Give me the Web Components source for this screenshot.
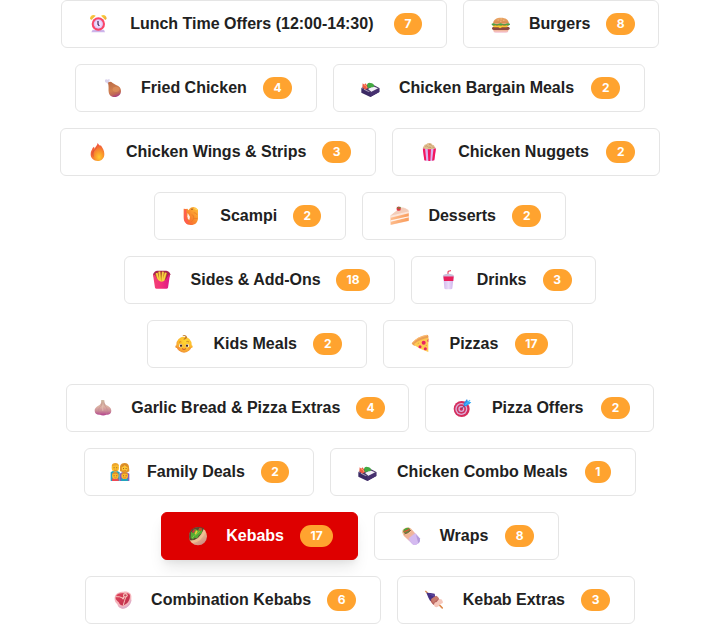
<!DOCTYPE html>
<html lang="en">
<head>
<meta charset="utf-8">
<title>Menu categories</title>
<style>
body{margin:0;background:#fff;font-family:"Liberation Sans",Arial,sans-serif;overflow:hidden}
</style>
</head>
<body>
<category-nav></category-nav>
<script>
const ICONS = {
clock:`<defs><radialGradient id="g"><stop offset=".6" stop-color="#f0dcff"/><stop offset="1" stop-color="#d9b8ee"/></radialGradient><linearGradient id="y" x2="1" y2="1"><stop stop-color="#ffd83c"/><stop offset="1" stop-color="#e8a03a"/></linearGradient></defs>
<path d="M11 47h34l3 8H7z" fill="#cdb4ea"/><path d="M3 14C3 5 12 0 20 5L7 18z" fill="url(#y)"/><path d="M53 14C53 5 44 0 36 5l13 13z" fill="url(#y)"/>
<circle cx="28" cy="30" r="20" fill="#fb4568"/><circle cx="28" cy="30" r="14" fill="url(#g)"/><path d="M27 21v10l4 5" stroke="#332556" stroke-width="3.5" fill="none"/>`,
leg:`<defs><linearGradient id="g" x1=".3" x2=".6" y2="1"><stop stop-color="#bd6c45"/><stop offset=".55" stop-color="#d08050"/><stop offset=".8" stop-color="#c06858"/><stop offset="1" stop-color="#a53a86"/></linearGradient></defs>
<path d="M6 6q3-4 7-1l6-2q3 4-1 8l4 6-5 3-6-6q-6 0-5-8z" fill="#d9d2ec"/><path d="M15 14q7-6 14 1l10 6c10 3 15 9 15 18 0 11-8 18-19 18-10 0-17-6-18-16-1-8 1-13-2-27z" fill="url(#g)"/><ellipse cx="39" cy="34" rx="10" ry="8" fill="#e0925d" opacity=".7"/>`,
bento:`<path d="M1 30l27 13 27-13v12L28 57 1 44z" fill="#3b2a64"/><path d="M28 43l27-13v12L28 57z" fill="#46306f"/><path d="M1 30l27-14 27 14-27 13z" fill="#4a3868"/><path d="M21 33l15-8 15 6-20 10z" fill="#f4eff9"/><path d="M4 28l1-12 5 4 3-4 4 4 4 10-8 5z" fill="#ee5941"/><path d="M10 22l5 1 3 7" stroke="#ff9a66" stroke-width="3" fill="none"/><path d="M18 21q2-8 10-6 10 0 11 8 1 5-7 5l-11 3z" fill="#43a941"/><path d="M9 34l14 7" stroke="#c4bad4" stroke-width="2"/>`,
burger:`<defs><linearGradient id="g" x2="0" y2="1"><stop stop-color="#eba765"/><stop offset="1" stop-color="#d98a50"/></linearGradient><linearGradient id="b" x2="0" y2="1"><stop stop-color="#f0b080"/><stop offset="1" stop-color="#f5c4d8"/></linearGradient></defs>
<path d="M7 46h45v4q0 6-7 6H14q-7 0-7-6z" fill="url(#b)"/><rect x="3" y="38" width="53" height="10" rx="5" fill="#8d493f"/><path d="M5 33h49l-7 7H33l-6 3-5-3H8z" fill="#fbc92f"/><rect x="6" y="30" width="47" height="4" fill="#e4474a"/><path d="M6 29C7 16 16 11 30 11s23 6 24 18z" fill="url(#g)"/><path d="M2 29q5-3 10 0t11 0 11 0 11 0 12 0v3q-6 4-11 1-6 3-11 0-6 3-11 0-6 3-11 0-6 4-11-1z" fill="#4ba347"/><path d="M20 18h3m6-3h3m5 4h3m-12 3h3" stroke="#fbe0b0" stroke-width="2"/>`,
fire:`<defs><radialGradient id="g" cx=".62" cy=".78" r=".75"><stop stop-color="#ffc832"/><stop offset=".4" stop-color="#fa982c"/><stop offset="1" stop-color="#ef493c"/></radialGradient></defs>
<path d="M29 3q2 5 8 9l1-3c6 9 11 17 11 27 0 13-8 21-20 21S8 49 8 37c0-9 4-13 6-19l4-4 2 6c2-7 8-9 9-17z" fill="url(#g)"/><path d="M26 16q-4 8-9 11-3 8-1 17M18 24q-6 6-6 16" stroke="#d94838" stroke-width="1.8" fill="none"/>`,
shrimp:`<defs><linearGradient id="g" x1="0" x2="1" y1="1" y2="0"><stop stop-color="#fa5141"/><stop offset=".5" stop-color="#f98a2c"/><stop offset="1" stop-color="#ffc23a"/></linearGradient></defs>
<path d="M5 8l7 1 4-1 4 5q5-10 14-10 9 0 14 8v24c0 14-8 22-22 22C12 57 5 48 5 34z" fill="url(#g)"/><path d="M17 21l7 11-2 10q-6-2-6-11z" fill="#fff0e8"/><path d="M29 26q7 0 6 10-1 9-8 11M35 20q9 0 10 7M36 37l11 1" stroke="#e97625" stroke-width="2" fill="none"/><path d="M10 10v29l7 13" stroke="#ff5d52" stroke-width="6" fill="none"/><circle cx="30" cy="10" r="2.3" fill="#8b5126"/><path d="M37 8l9 3" stroke="#ffe05c" stroke-width="3"/>`,
popcorn:`<defs><clipPath id="c"><path d="M8 19q20 6 40 0l-5 36q-15 4-30 0z"/></clipPath></defs><path d="M9 20q-2-5 3-8 0-5 7-5 3-5 11-4 5 1 7 5 6 0 7 6 4 2 2 7l-18 5z" fill="#dfbd8e"/><path d="M16 13q4-3 7 1m4-7q5-1 7 4m-9 5q6-2 9 2m3-3q4-1 6 3" stroke="#b58757" stroke-width="2" fill="none"/><g clip-path="url(#c)"><path d="M6 17h44v41H6z" fill="#d9b2ef"/><path d="M6 17h9l4 41h-9zM23 17h10l-2 41h-6zM41 17h9l-6 41h-8z" fill="#f3165e"/></g>`,
cake:`<defs><linearGradient id="g" x2="1" y2=".4"><stop stop-color="#ffc9a0"/><stop offset="1" stop-color="#f99a58"/></linearGradient></defs>
<path d="M1 29L33 4q18 1 24 12v29L2 57z" fill="#fbdccb"/><path d="M1 29l56-13v6L1 36z" fill="#fce6da"/><path d="M2 35l54-13v10L2 45z" fill="url(#g)"/><path d="M2 46l54-12v10L2 56z" fill="url(#g)"/><path d="M2 43l54-12v3L2 47z" fill="#fff5ef"/><path d="M1 29L31 5q20 1 26 11z" fill="#f3ccb8"/><circle cx="26" cy="8" r="6.5" fill="#e23443"/><path d="M19 2l7 3 7-3-2 5-6 1z" fill="#559b3c"/>`,
fries:`<defs><linearGradient id="g" x2="1"><stop stop-color="#f24372"/><stop offset=".5" stop-color="#f22f7c"/><stop offset="1" stop-color="#dc1785"/></linearGradient></defs>
<path d="M3 13q4-10 13-11h27q10 2 12 11l-7 18H9z" fill="#a82350"/><path d="M13 10l8 30M22 5l3 31M32 6l-2 30M42 8l-9 30" stroke="#c38218" stroke-width="7"/><path d="M14 9l8 30M22 5l3 31M33 5l-3 32M41 8l-8 30" stroke="#f9d044" stroke-width="5"/><path d="M3 14q5-2 9 6 6 14 17 15 11-1 17-14 4-8 8-8l-6 40q-1 3-5 3H14q-4 0-5-3z" fill="url(#g)"/>`,
baby:`<defs><radialGradient id="g" cx=".6" cy=".3" r=".75"><stop stop-color="#ffd934"/><stop offset=".6" stop-color="#fdbb2d"/><stop offset="1" stop-color="#ef8d38"/></radialGradient></defs>
<circle cx="5" cy="38" r="4" fill="#ef9a31"/><circle cx="49" cy="38" r="4" fill="#fab431"/><ellipse cx="27" cy="32" rx="23" ry="24" fill="url(#g)"/><path d="M25 15q8-3 6-8-3-4-9 0 2-5 7-4 8 2 7 8-3 5-9 6z" fill="#c47a28"/><path d="M12 25q4-3 7-1m15-1q4-2 8 1" stroke="#b66c24" stroke-width="2" fill="none"/><circle cx="17" cy="35" r="5" fill="#fff"/><circle cx="37" cy="35" r="5" fill="#fff"/><circle cx="18" cy="35" r="3.5" fill="#4a2926"/><circle cx="36" cy="35" r="3.5" fill="#4a2926"/><path d="M21 44q6 5 12 0" stroke="#b9402f" stroke-width="2.5" fill="none"/><circle cx="10" cy="43" r="4" fill="#f7813b" opacity=".5"/><circle cx="44" cy="43" r="4" fill="#f7813b" opacity=".5"/>`,
drink:`<defs><linearGradient id="g" x2="1"><stop stop-color="#d3b7ed"/><stop offset=".5" stop-color="#eadbf8"/><stop offset="1" stop-color="#cdb0eb"/></linearGradient></defs>
<path d="M27 14V4l9-2" stroke="#e62b4a" stroke-width="3" fill="none"/><path d="M13 18h31l-4 37q0 3-5 3H21q-4 0-5-3z" fill="url(#g)"/><path d="M13 19h31l-1 14H15z" fill="#e91e5a"/><path d="M14 14q14-5 28 0l4 5H11z" fill="#c9c0d9"/>`,
pizza:`<path d="M2 28Q18 7 48 2q4 1 4 5v12L10 35q-6-1-8-7z" fill="#eb9f55"/><path d="M10 29Q27 15 52 11v43q-22-6-42-20z" fill="#ffc953"/><path d="M4 27Q21 8 48 4" stroke="#ffc078" stroke-width="3" fill="none"/><circle cx="38" cy="26" r="6" fill="#e92362"/><circle cx="27" cy="38" r="4.5" fill="#e92362"/><circle cx="43" cy="44" r="4.5" fill="#e92362"/><path d="M52 15v10q-6-5 0-10z" fill="#e92362"/><path d="M20 29l4-2m20 8l4-1" stroke="#c9a040" stroke-width="2"/>`,
garlic:`<defs><linearGradient id="g" x2="0" y2="1"><stop stop-color="#c9b39c"/><stop offset=".45" stop-color="#dbb0a3"/><stop offset=".7" stop-color="#cb8e98"/><stop offset="1" stop-color="#b3408d"/></linearGradient></defs>
<path d="M21 7q5-2 10 0-1 9 5 14c9 4 16 9 16 17 0 9-7 13-15 12-5 3-14 3-19 0C9 51 2 46 2 38c0-9 8-13 15-17 5-4 5-9 4-14z" fill="url(#g)"/><path d="M24 13q0 10-8 16-6 8 2 19M30 13q1 11 8 17 5 8-2 18" stroke="#c08589" stroke-width="1.3" fill="none"/><path d="M27 20q-4 10 0 18" stroke="#e6c2b6" stroke-width="4" fill="none" opacity=".6"/>`,
family:`<path d="M-4 31q12-11 27 0v26H-4z" fill="#22a1c5"/><path d="M23 35q14-12 29 0v22H23z" fill="#885ab8"/><path d="M24 27V13Q27 3 38 3q12 1 13 11l1 14q-12 8-28-1z" fill="#e0952c"/><ellipse cx="10" cy="17" rx="11" ry="12" fill="#fbbd2d"/><path d="M-1 13Q0 3 10 3q10 0 11 10L15 9 7 11z" fill="#eda52c"/><ellipse cx="38" cy="18" rx="9" ry="10" fill="#ffc735"/><path d="M28 16q8-2 10-7 4 6 10 7-2-12-10-11-9 0-10 11z" fill="#d98a28"/><path d="M0 49h20v8H0z" fill="#ed4955"/><path d="M27 49h21v8H27z" fill="#21a3bd"/><ellipse cx="10" cy="41" rx="10" ry="10" fill="#fcb92d"/><ellipse cx="38" cy="41" rx="10" ry="10" fill="#fcb92d"/><path d="M1 38q2-9 9-8 8 0 9 8-9-6-18 0zM29 38q1-9 9-8 8 0 9 8-8-5-18 0z" fill="#dc8c2a"/><g fill="#85502a"><path d="M5 16h2.5v3H5zM13 16h2.5v3H13zM33 18h2.5v3H33zM41 18h2.5v3H41zM5 40h2.5v3H5zM13 40h2.5v3H13zM33 40h2.5v3H33zM41 40h2.5v3H41z"/></g><path d="M6 24q4 3 9 0M34 25q4 2 8 0M7 47q4 2 7 0m20 0q4 2 8 0" stroke="#d46824" stroke-width="2" fill="none"/>`,
target:`<circle cx="26" cy="33" r="24" fill="#d52d5c"/><circle cx="25" cy="33" r="18" fill="#ddaed9"/><circle cx="25" cy="33" r="14" fill="#cf315f"/><circle cx="25" cy="33" r="9" fill="#dbb0dc"/><circle cx="25" cy="33" r="5" fill="#d32955"/><path d="M25 33l15-15" stroke="#5a467e" stroke-width="3"/><path d="M32 16L42 3l3 8 8 2-13 12-8-1z" fill="#2e8de9"/><path d="M37 20L51 7" stroke="#49c2fb" stroke-width="4"/><path d="M45 12h10l-6 7-11 3z" fill="#34a8f5"/>`,
kebab:`<defs><linearGradient id="g" x2=".6" y2="1"><stop stop-color="#d5a276"/><stop offset=".6" stop-color="#ecba8d"/><stop offset="1" stop-color="#cf8e83"/></linearGradient></defs>
<circle cx="27" cy="31" r="27" fill="url(#g)"/><path d="M2 43Q-4 23 9 10 23-2 45 7q-1 23-23 34-13 6-20 2z" fill="#5d472f"/><path d="M5 35l1-18 8 4L17 8l10 5 5-7 8 5-2 12-8 4-5 10-9-2-4 6z" fill="#55aa34"/><path d="M9 17l6-8 4 3-6 10z" fill="#cb3840"/><path d="M31 6l8 1-3 8-7-2z" fill="#c94c32"/><path d="M17 24l4-11 5 3-5 10z" fill="#f4ca38"/><path d="M18 28l14-12M10 36l6-8" stroke="#84cc44" stroke-width="3"/><path d="M2 43Q30 46 44 10l6 5Q39 48 10 51z" fill="#efbf94"/>`,
wrap:`<defs><linearGradient id="g" x2="1" y2="1"><stop stop-color="#f0ae82"/><stop offset=".45" stop-color="#f0b59c"/><stop offset=".6" stop-color="#d7b9e9"/><stop offset="1" stop-color="#b99bdd"/></linearGradient></defs>
<path d="M1 19L26 7l27 30q4 13-11 19-7 2-12-3L5 29z" fill="url(#g)"/><path d="M21 36l20-14 12 15q4 13-11 19-7 2-12-3z" fill="#d4baf0"/><path d="M42 26l11 11q3 9-4 15z" fill="#b39adb"/><ellipse cx="14" cy="15" rx="14" ry="10" transform="rotate(-27 14 15)" fill="#f3c89b"/><ellipse cx="14" cy="14" rx="11" ry="7" transform="rotate(-27 14 14)" fill="#65923c"/><path d="M6 18L22 10" stroke="#e44f36" stroke-width="4"/><path d="M6 12l10-5" stroke="#4baa3b" stroke-width="4"/><path d="M7 24q10-1 20-12" stroke="#704232" stroke-width="2.5" fill="none"/>`,
meat:`<defs><linearGradient id="g" x2="1" y2="1"><stop stop-color="#e1445b"/><stop offset="1" stop-color="#b92d4a"/></linearGradient></defs>
<path d="M5 22C7 10 19 5 32 5c13-1 22 4 23 13v15C49 48 40 56 29 56 18 55 15 49 13 43 6 38 4 31 5 22z" fill="#f5b4bb"/><path d="M54 28q-6 20-25 23-12-2-15-9 3 12 15 14 21-2 26-23z" fill="#ddaec9"/><path d="M8 22q3-12 17-12l13-1q12 1 13 8 0 15-11 24-13 10-20 1-2-6-7-9-7-4-5-12z" fill="url(#g)"/><path d="M9 20q12-1 19 4l5 3M38 22l-3 9-4 14" stroke="#f8c4bc" stroke-width="3" fill="none"/><circle cx="37" cy="16" r="7" fill="#f8c4bc"/><circle cx="37" cy="16" r="3.5" fill="#c14a5c"/><path d="M33 21l-5 6" stroke="#f8c4bc" stroke-width="4"/>`,
skewer:`<path d="M2 4l49 49" stroke="#d88d58" stroke-width="4" stroke-linecap="round"/><path d="M4 8q12 0 25 3l2 11-15 12q-5-8-12-26z" fill="#463184"/><path d="M8 10l20 4 2 8z" fill="#5c439c"/><rect x="18" y="21" width="25" height="23" rx="9" transform="rotate(-35 30 32)" fill="#b6605c"/><path d="M19 27L34 17l8 8-18 14z" fill="#c87b6d"/><path d="M27 43q1-7 8-7l7-9q10-1 11 7 3 6-6 8l-6 7-6 3q-8 0-8-9z" fill="#f5c7bb"/><path d="M45 46l7 8" stroke="#df8e50" stroke-width="4" stroke-linecap="round"/>`
};
// icon, title, item count, button width, title nudge, badge nudge
const ITEMS = [
['clock','Lunch Time Offers (12:00-14:30)',7,386,-.7],['burger','Burgers',8,196],
['leg','Fried Chicken',4,242],['bento','Chicken Bargain Meals',2,312,-.7],
['fire','Chicken Wings & Strips',3,316],['popcorn','Chicken Nuggets',2,268,-.7],
['shrimp','Scampi',2,192,.3],['cake','Desserts',2,204],
['fries','Sides & Add-Ons',18,271,.6],['drink','Drinks',3,185,-.3],
['baby','Kids Meals',2,220],['pizza','Pizzas',17,190],
['garlic','Garlic Bread & Pizza Extras',4,343,-.7,-1],['target','Pizza Offers',2,229,0,.7],
['family','Family Deals',2,230],['bento','Chicken Combo Meals',1,306],
['kebab','Kebabs',17,197,-.8,-.7],['wrap','Wraps',8,185,-.5],
['meat','Combination Kebabs',6,296],['skewer','Kebab Extras',3,238,-.3]];

customElements.define('food-icon', class extends HTMLElement {
  connectedCallback(){
    this.attachShadow({mode:'open'}).innerHTML = `<style>:host{display:block;flex:none;width:20px;height:20px;padding:0 2px 0 3px}:host([name=family]){padding-right:0;padding-left:3px;width:19px}svg{display:block;overflow:visible}</style><svg width="20" height="20" viewBox="0 0 60 60" aria-hidden="true">${ICONS[this.getAttribute('name')]}</svg>`;
  }
});
customElements.define('count-badge', class extends HTMLElement {
  connectedCallback(){
    this.attachShadow({mode:'open'}).innerHTML = `<style>:host{display:block;flex:none;box-sizing:border-box;height:22px;padding:0 10.5px;border-radius:11px;background:#ffa32f;color:#fff;font:700 12px/22px Inter,sans-serif}</style><slot></slot>`;
  }
});
customElements.define('category-button', class extends HTMLElement {
  connectedCallback(){
    this.attachShadow({mode:'open'}).innerHTML = `<style>
:host{display:block;flex:none}
button{all:unset;box-sizing:border-box;display:flex;align-items:center;width:100%;height:48px;padding:0 24px;border:1px solid #e5e5e5;border-radius:6px;background:#fff;color:#212121;cursor:pointer}
.label{flex:1;margin-left:calc(16px + var(--title-nudge));margin-right:calc(0px - var(--title-nudge));font-size:16px;font-weight:700;line-height:24px;text-align:center;white-space:nowrap}
:host([active]) button{background:#de0000;border-color:#de0000;color:#fff;box-shadow:0 10px 15px -3px rgba(0,0,0,.1),0 4px 6px -2px rgba(0,0,0,.05)}
::slotted(count-badge){margin-left:calc(16px + var(--badge-nudge));margin-right:calc(0px - var(--badge-nudge))}
</style><button><slot name="icon"></slot><span class="label"><slot></slot></span><slot name="count"></slot></button>`;
  }
});
customElements.define('category-nav', class extends HTMLElement {
  connectedCallback(){
    this.attachShadow({mode:'open'}).innerHTML = `<style>:host{display:block}nav{display:flex;flex-wrap:wrap;justify-content:center;gap:16px;width:640px;margin:0 auto}</style><nav>${ITEMS.map(([i,t,n,w,d=0,b=0])=>`<category-button style="width:${w}px;--title-nudge:${d}px;--badge-nudge:${b}px"${t==='Kebabs'?' active':''}><food-icon slot="icon" name="${i}"></food-icon>${t.replace('&','&amp;')}<count-badge slot="count">${n}</count-badge></category-button>`).join('')}</nav>`;
  }
});
</script>
</body>
</html>
